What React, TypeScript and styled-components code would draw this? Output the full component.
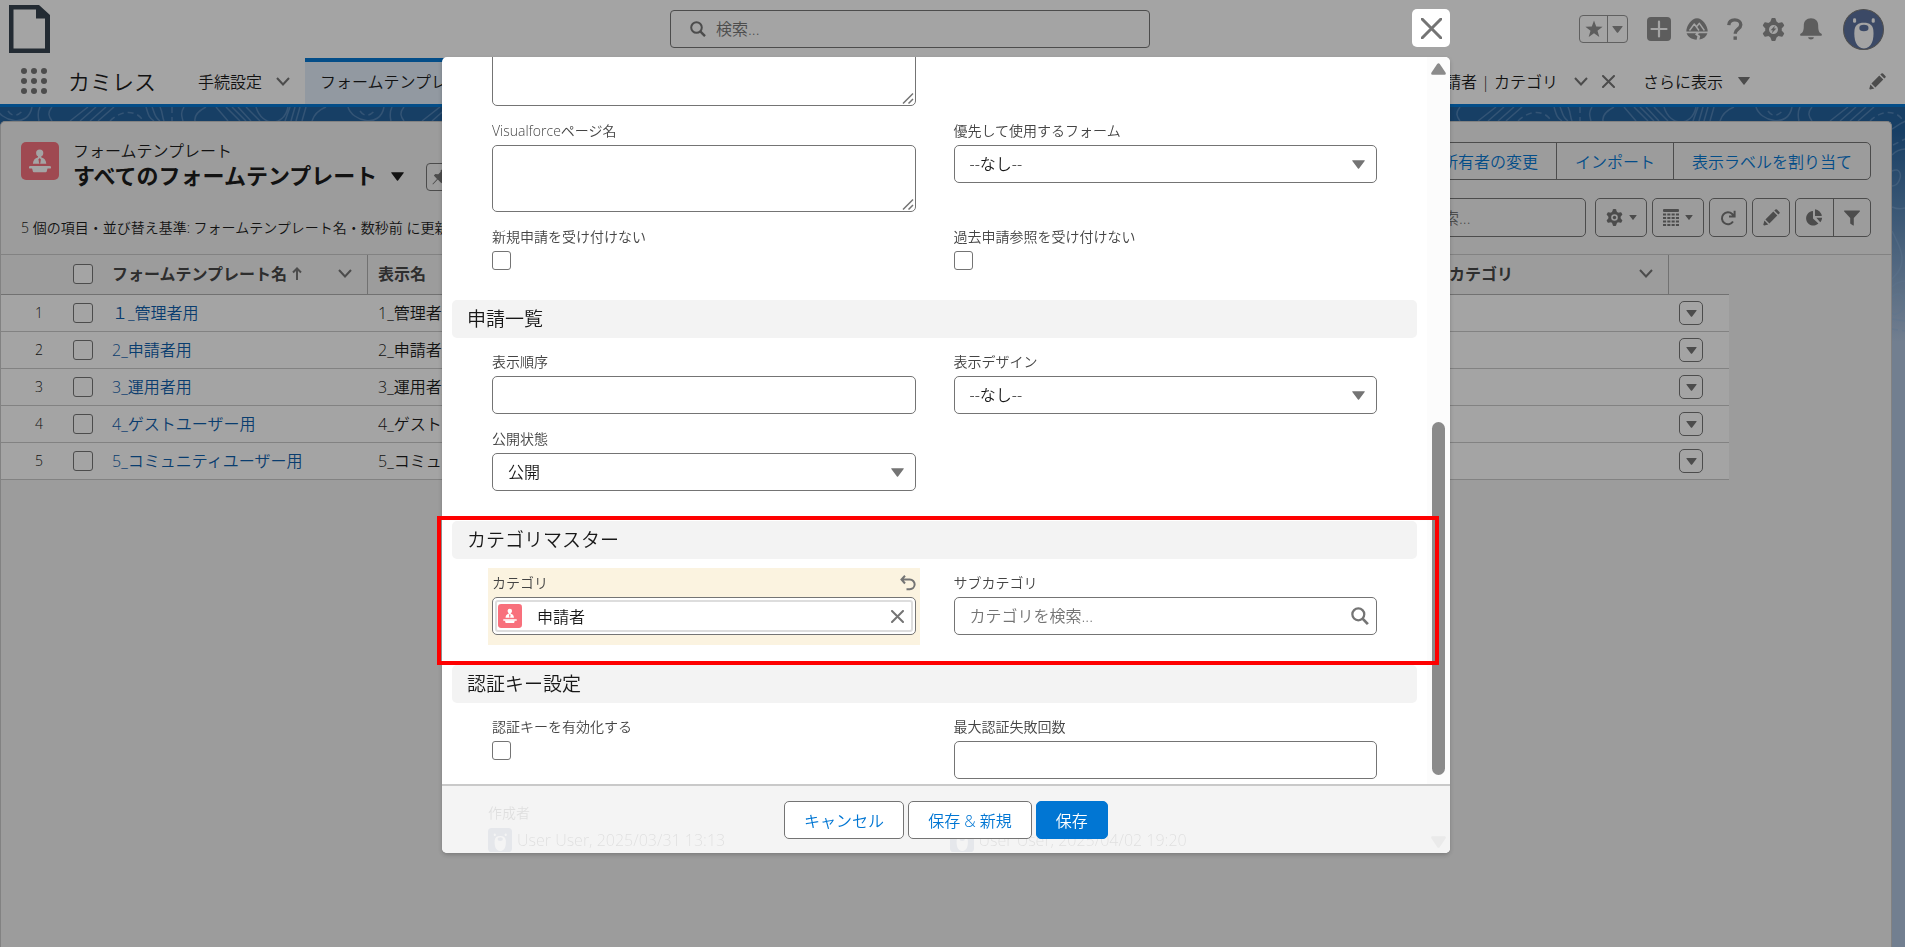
import React, { useId } from "react";
import styled, { createGlobalStyle, css } from "styled-components";

const GlobalStyle = createGlobalStyle`
  *, *::before, *::after { box-sizing: border-box; }
  body { margin: 0; background: #b0c4df; }
  body, button, input, select, textarea {
    font-family: "Open Sans", "Noto Sans CJK JP", sans-serif;
    font-size: 16px;
    font-weight: 350;
    color: #181818;
  }
  button { cursor: pointer; }
`;

/* ---------- icons ---------- */

const Svg = styled.svg`
  display: block;
  flex: none;
  fill: currentColor;
`;

const StrokeSvg = styled(Svg)`
  fill: none;
  stroke: currentColor;
`;

const Chevron = () => (
  <StrokeSvg width="14" height="9" viewBox="0 0 14 9" strokeWidth="2" aria-hidden>
    <path d="M1 1 7 7.5 13 1" />
  </StrokeSvg>
);

const Triangle = ({ w = 12 }: { w?: number }) => (
  <Svg width={w} height={Math.round(w * 0.66)} viewBox="0 0 12 8" aria-hidden>
    <path d="M.6 0h10.8q.8.2.3.8L6.5 7.6q-.5.5-1 0L.3.8Q-.2.2.6 0Z" />
  </Svg>
);

const Cross = ({ size = 13, stroke = 2 }: { size?: number; stroke?: number }) => (
  <StrokeSvg width={size} height={size} viewBox={`0 0 ${size} ${size}`} strokeWidth={stroke} strokeLinecap="round" aria-hidden>
    <path d={`M1 1 ${size - 1} ${size - 1}M${size - 1} 1 1 ${size - 1}`} />
  </StrokeSvg>
);

const SearchIcon = ({ size = 16 }: { size?: number }) => (
  <StrokeSvg width={size} height={size} viewBox="0 0 16 16" strokeWidth="2" aria-hidden>
    <circle cx="6.5" cy="6.5" r="5.3" />
    <path d="m10.3 10.3 4.7 4.9" strokeWidth="2.4" />
  </StrokeSvg>
);

const PencilIcon = () => (
  <Svg width="17" height="17" viewBox="0 0 17 17" aria-hidden>
    <path d="M.8 16.3q-.6 0-.5-.6l1.1-4.1 3.9 3.9-4.1 1.1ZM2.4 10.4l7.9-7.9 4 4-7.9 7.9ZM11.3 1.6 12.4.5q.8-.7 1.6 0l2.4 2.4q.8.8 0 1.6l-1.1 1.1Z" />
  </Svg>
);

const GearIcon = ({ size, bolt }: { size: number; bolt?: boolean }) => (
  <Svg width={size} height={size} viewBox="-12 -12 24 24" aria-hidden>
    <circle r="6.7" fill="none" stroke="currentColor" strokeWidth="4" />
    {[0, 60, 120, 180, 240, 300].map((a) => (
      <path key={a} transform={`rotate(${a})`} d="M-3.4-7.6-2.2-11.3q.3-.6.8-.6h2.8q.6 0 .8.6L3.4-7.6Z" />
    ))}
    {bolt ? <path d="M1.4-4-3 .7h2.2L-1.7 4 3-1H.7Z" /> : <circle r="2.4" />}
  </Svg>
);

const StarIcon = () => (
  <Svg width="18" height="18" viewBox="0 0 18 18" aria-hidden>
    <path d="m9 .4 2.2 6.1 6.4.2-5.1 4 1.8 6.3L9 13.3 3.7 17l1.8-6.3-5.1-4 6.4-.2Z" />
  </Svg>
);

const PlusSquareIcon = () => (
  <Svg width="24" height="24" viewBox="0 0 24 24" aria-hidden>
    <rect width="24" height="24" rx="4" />
    <path d="M12 4.500v15M4.500 12h15" stroke="#fff" strokeWidth="2.2" strokeLinecap="round" />
  </Svg>
);

const TrailIcon = () => (
  <Svg width="22" height="22" viewBox="0 0 22 22" aria-hidden>
    <path d="M.3 13.500C.3 8 5.500.3 11 .3S21.700 8 21.700 13.500Z" />
    <path d="M.6 15.300h9.600l-1.200 1.200 2.400 1.800-.8 3.400C5.500 21.500 1.800 19 .6 15.300ZM12.800 15.300h8.600c-1 3.300-4 5.700-8 6.300l.8-3.600-2.200-1.600Z" />
    <path d="M3.500 12.500 8.300 6l4.700 6.500M10.500 8.800 13.400 5.300l5 7.200" fill="none" stroke="#fff" strokeWidth="1.4" strokeLinejoin="round" />
  </Svg>
);

const HelpIcon = () => (
  <StrokeSvg width="16" height="22" viewBox="0 0 16 22" strokeWidth="3.4" aria-hidden>
    <path d="M1.800 7.200C2 3.500 4.600 1.900 7.800 1.900c3.400 0 6 1.900 6 4.900 0 4.200-5.500 4.400-5.500 8.200v.8" />
    <path d="M8.200 18.400v3.400" />
  </StrokeSvg>
);

const BellIcon = () => (
  <Svg width="22" height="22" viewBox="0 0 22 22" aria-hidden>
    <path d="M11 .3c4.500 0 7.200 3 7.200 7.200 0 5 .8 7 3.300 8.300.6.500.5 1.900-.5 1.900H1c-1 0-1.100-1.400-.5-1.900 2.500-1.300 3.300-3.300 3.300-8.300C3.800 3.300 6.500.3 11 .3ZM8.100 19.300h5.800c-.3 3-5.500 3-5.800 0Z" />
  </Svg>
);

const BearShapes = () => (
  <>
    <rect x="9.8" y="9" width="3" height="4.5" rx="1.4" fill="#fff" />
    <rect x="28" y="9" width="3" height="4.5" rx="1.4" fill="#fff" />
    <path d="M20.400 13.300c5.800 0 8.700 2.500 9.200 7.200.9 9-1.600 18-9.200 18s-10.100-9-9.200-18c.5-4.700 3.400-7.200 9.200-7.200Z" fill="#fff" />
    <ellipse cx="20.4" cy="18.5" rx="4.5" ry="3.2" />
  </>
);

const AvatarIcon = () => (
  <Svg width="41" height="41" viewBox="0 0 40 40" color="#5a709d" aria-hidden>
    <circle cx="20" cy="20" r="19.5" stroke="#777" />
    <BearShapes />
  </Svg>
);

const UserIcon = () => (
  <Svg width="24" height="24" viewBox="0 0 40 40" color="#5a709d" aria-hidden>
    <rect width="40" height="40" rx="6" />
    <BearShapes />
  </Svg>
);

const ObjectIcon = ({ size }: { size: number }) => (
  <Svg width={size} height={size} viewBox="0 0 38 38" aria-hidden>
    <rect width="38" height="38" rx="5" fill="#f8707c" />
    <g fill="#fff">
      <circle cx="18.7" cy="11" r="3.6" />
      <path d="M17.300 13h2.800l.3 2.500c2.900.6 4.700 2.800 4.900 6.300H11.900c.2-3.500 2-5.700 4.900-6.300Z" />
      <rect x="8" y="24" width="22" height="2.6" rx="1.2" />
      <path d="M11 26h15.600l-.8 3.300q-.2.900-1.100.9H12.900q-.9 0-1.100-.9Z" />
    </g>
    <path d="m18.700 16 1.200 1.500-.7 4.300h-1l-.7-4.300Z" fill="#f8707c" />
  </Svg>
);

const LogoIcon = () => (
  <Svg width="42" height="48" viewBox="0 0 42 48" color="#33404c" aria-hidden>
    <path fillRule="evenodd" d="M0 0h30l11 10v38H0ZM4.500 4.500v39H36V13.500h-9v-9Z" />
  </Svg>
);

const LauncherIcon = () => (
  <Svg width="26" height="26" viewBox="0 0 26 26" aria-hidden>
    {[3, 13, 23].map((y) => [3, 13, 23].map((x) => <circle key={`${x}-${y}`} cx={x} cy={y} r="3" />))}
  </Svg>
);

const PinIcon = () => (
  <Svg width="16" height="16" viewBox="0 0 16 16" aria-hidden>
    <path d="M9.500.5 15.500 6.500l-1.300 1-1-.3-2.500 2.500.2 3-1.500 1.500L5.800 10.600 1 15.500l-.6-.6L5 10 1.800 6.600l1.500-1.500 3 .2L8.800 2.800l-.3-1Z" />
  </Svg>
);

const TableIcon = () => (
  <Svg width="16" height="17" viewBox="0 0 16 17" aria-hidden>
    <rect width="16" height="3" rx="1" />
    {[4.5, 8, 11.5, 15].map((y) => [0, 4.3, 8.6, 12.9].map((x) => <rect key={`${x}-${y}`} x={x} y={y} width="3.1" height="2" />))}
  </Svg>
);

const RefreshIcon = () => (
  <StrokeSvg width="16" height="16" viewBox="0 0 16 16" strokeWidth="2" aria-hidden>
    <path d="M13 11.500A6 6 0 1 1 12.200 4l1.800 2M14.600.8v5.700H9" />
  </StrokeSvg>
);

const ChartIcon = () => (
  <Svg width="17" height="17" viewBox="0 0 17 17" aria-hidden>
    <path d="M7 2v7.600l5.400 5A7.300 7.300 0 1 1 7 2Z" />
    <path d="M9 .3A7.500 7.500 0 0 1 15.800 7H9ZM10.300 8.800h5.800c-.1 1.900-.8 3.500-1.900 4.500Z" />
  </Svg>
);

const FilterIcon = () => (
  <Svg width="16" height="16" viewBox="0 0 16 16" aria-hidden>
    <path d="M.5.5h15q.8.300.3 1L9.800 8v7.200q-.2.600-.7.300l-2.600-1.700q-.3-.2-.3-.6V8L.2 1.500Q-.3.800.5.500Z" />
  </Svg>
);

const UndoIcon = () => (
  <StrokeSvg width="16" height="16" viewBox="0 0 16 16" strokeWidth="2" aria-hidden>
    <path d="M5 .8 1.500 4.500 5 8.500M1.800 4.500h8a4.700 4.700 0 0 1 0 9.700H6.500" />
  </StrokeSvg>
);

const SortIcon = () => (
  <StrokeSvg width="10" height="13" viewBox="0 0 10 13" strokeWidth="2" aria-hidden>
    <path d="M5 13V1.500M1 5.500l4-4 4 4" />
  </StrokeSvg>
);

/* ---------- global header ---------- */

const Page = styled.div`
  display: flex;
  flex-direction: column;
  min-height: 100vh;
`;

const TopBar = styled.header`
  display: grid;
  grid-template-columns: 670fr 480px 755fr;
  align-items: center;
  height: 58px;
  background: #fff;
`;

const Logo = styled.div`
  padding-left: 9px;
`;

const GlobalSearch = styled.label`
  display: flex;
  align-items: center;
  gap: 10px;
  height: 38px;
  padding: 0 19px;
  border: 1px solid #747474;
  border-radius: 4px;
  color: #747474;
  input {
    flex: 1;
    border: 0;
    background: none;
    outline: 0;
    padding: 0;
  }
  input::placeholder { color: #747474; }
`;

const TopActions = styled.div`
  display: flex;
  justify-content: flex-end;
  align-items: center;
  padding-right: 21px;
`;

const FavoriteGroup = styled.div`
  display: flex;
  margin-right: 12px;
  border: 1px solid #939393;
  border-radius: 4px;
  button + button { border-left: 1px solid #939393; width: 20px; }
`;

const IconButton = styled.button<{ $w?: number; $h?: number }>`
  display: flex;
  align-items: center;
  justify-content: center;
  width: ${(p) => p.$w ?? 38}px;
  height: ${(p) => p.$h ?? 38}px;
  padding: 0;
  border: 0;
  background: none;
  color: #8f8f8f;
`;

const AvatarButton = styled(IconButton)`
  width: 41px;
  height: 53px;
  margin-left: 13px;
`;

const NavBar = styled.nav`
  display: flex;
  align-items: center;
  height: 49px;
  padding: 0 19px 0 21px;
  border-bottom: 3px solid #0176d3;
  background: #fff;
  color: #747474;
`;

const AppName = styled.span`
  margin: 0 42px 0 21px;
  font-size: 22px;
  line-height: 30px;
  color: #181818;
`;

const NavTab = styled.div<{ $active?: boolean }>`
  display: flex;
  align-items: center;
  gap: 14px;
  height: 46px;
  padding-right: 15px;
  ${(p) =>
    p.$active &&
    css`
      padding-left: 15px;
      border-top: 4px solid #0176d3;
      padding-bottom: 4px;
      background: #e2eefb;
    `}
  a { color: #181818; text-decoration: none; }
`;

const NavEnd = styled.div`
  display: flex;
  align-items: center;
  gap: 14px;
  margin-left: auto;
  a { margin-right: 2px; color: #181818; text-decoration: none; }
`;

const MoreButton = styled.button`
  display: flex;
  align-items: center;
  gap: 15px;
  margin: 0 105px 0 14px;
  padding: 0;
  border: 0;
  background: none;
  svg { color: #747474; }
`;

/* ---------- list view ---------- */

const Main = styled.main`
  position: relative;
  display: flex;
  flex: 1;
  padding: 14px 13px 0 0;
  background: linear-gradient(#215f9b 0, #215f9b 24px, #b0c4df 235px);
`;

const Contours = styled.svg`
  position: absolute;
  inset: 0;
  width: 100%;
  height: 240px;
  fill: none;
  stroke: #8fb4dc;
  stroke-width: 1.5;
  opacity: 0.4;
`;

const Card = styled.section`
  position: relative;
  flex: 1;
  min-width: 0;
  border: 1px solid #c9c9c9;
  border-bottom: 0;
  border-radius: 5px 5px 0 0;
  background: #f3f3f3;
`;

const CardHead = styled.div`
  padding: 20px 20px 17px;
  border-bottom: 1px solid #c9c9c9;
`;

const HeadRow = styled.div`
  display: flex;
  align-items: flex-start;
  gap: 14px;
`;

const Titles = styled.div`
  p { margin: 0; line-height: 18px; }
`;

const TitleLine = styled.div`
  display: flex;
  align-items: center;
  height: 33px;
  h1 {
    align-self: flex-start;
    margin: 0 14px 0 0;
    font-size: 22px;
    font-weight: 700;
    line-height: 30px;
    white-space: nowrap;
  }
`;

const outlined = css`
  border: 1px solid #747474;
  border-radius: 5px;
`;

const PinButton = styled(IconButton)`
  ${outlined}
  margin-left: 22px;
  border-radius: 4px;
  color: #747474;
`;

const ActionGroup = styled.div`
  ${outlined}
  display: flex;
  margin-left: auto;
  button {
    height: 36px;
    padding: 0 18px;
    border: 0;
    background: none;
    color: #0176d3;
    white-space: nowrap;
  }
  button + button { border-left: 1px solid #747474; }
`;

const ToolRow = styled.div`
  display: flex;
  align-items: center;
  gap: 5px;
  margin-top: 5px;
`;

const Info = styled.p`
  align-self: flex-end;
  flex: 1;
  margin: 0;
  font-size: 14px;
  line-height: 18px;
`;

const ListSearch = styled.input`
  ${outlined}
  width: 288px;
  height: 39px;
  margin-right: 4px;
  padding: 0 12px 0 32px;
  background: none;
  &::placeholder { color: #747474; }
`;

const ToolButton = styled(IconButton)`
  ${outlined}
  gap: 6px;
  height: 39px;
  color: #747474;
`;

const ToolPair = styled.div`
  ${outlined}
  display: flex;
  button { width: 37px; height: 37px; color: #747474; }
  button + button { border-left: 1px solid #747474; width: 37px; }
`;

const ListTable = styled.table`
  width: calc(100% - 162px);
  table-layout: fixed;
  border-collapse: separate;
  border-spacing: 0;
  th, td {
    height: 37px;
    padding: 0 10px;
    border-bottom: 1px solid #c9c9c9;
    text-align: left;
    line-height: 20px;
  }
  th {
    height: 40px;
    padding-bottom: 2px;
    border-bottom-color: #aeaeae;
    color: #444;
    font-weight: 700;
  }
  td { background: #fff; }
  td:first-child { padding-right: 9px; text-align: right; font-size: 14px; }
  td:nth-child(2), th:nth-child(2) { padding-left: 21px; }
  a { color: #0b5cab; text-decoration: none; }
`;

const Col = styled.col<{ $w?: number }>`
  width: ${(p) => (p.$w ? `${p.$w}px` : "auto")};
`;

const HeadCell = styled.th<{ $divider?: boolean }>`
  ${(p) => p.$divider && css`border-right: 1px solid #aeaeae;`}
`;

const HeadInner = styled.div`
  display: flex;
  align-items: center;
  gap: 5px;
  color: #747474;
  span { color: #444; }
  svg:last-child { margin-left: auto; margin-right: 5px; }
`;

const Check = styled.input<{ $size: number }>`
  appearance: none;
  display: block;
  width: ${(p) => p.$size}px;
  height: ${(p) => p.$size}px;
  margin: 0;
  border: 1px solid #747474;
  border-radius: 3px;
  background: #fff;
`;

const RowMenu = styled(IconButton)`
  ${outlined}
  color: #747474;
`;

/* ---------- modal ---------- */

const Backdrop = styled.div`
  position: fixed;
  inset: 0;
  display: flex;
  flex-direction: column;
  align-items: center;
  gap: 10px;
  padding: 9px 13px 94px 0;
  background: rgba(8, 7, 7, 0.37);
`;

const ModalTop = styled.div`
  display: flex;
  justify-content: flex-end;
  width: 70%;
  max-width: 1008px;
`;

const CloseButton = styled(IconButton)`
  border-radius: 5px;
  background: #fff;
  color: #747474;
`;

const Modal = styled.div`
  position: relative;
  flex: 1;
  min-height: 0;
  width: 70%;
  max-width: 1008px;
`;

const ModalPanel = styled.div`
  position: relative;
  display: flex;
  height: 100%;
  overflow: hidden;
  border-radius: 5px;
  background: #fff;
  box-shadow: 0 2px 4px rgba(0, 0, 0, 0.2);
`;

const ModalBody = styled.div`
  flex: 1;
  min-width: 0;
  padding: 0 10px;
`;

const FieldGrid = styled.div<{ $scrolled?: boolean }>`
  display: grid;
  grid-template-columns: 1fr 1fr;
  column-gap: 30px;
  padding: 0 36px;
  margin-top: ${(p) => (p.$scrolled ? -22 : 0)}px;
`;

const SectionTitle = styled.h3`
  margin: 20px 0 9px;
  padding: 0 15px;
  border-radius: 5px;
  background: #f3f3f3;
  font-size: 19px;
  font-weight: inherit;
  line-height: 38px;
`;

const FieldCell = styled.div<{ $edited?: boolean }>`
  padding: 4px 4px 10px;
  background: ${(p) => (p.$edited ? "#fbf3e0" : "transparent")};
`;

const LabelRow = styled.div`
  display: flex;
  align-items: center;
  justify-content: space-between;
  height: 22px;
  margin-bottom: 3px;
  label { font-size: 14px; line-height: 22px; color: #444; }
`;

const FieldButton = styled(IconButton)`
  color: #747474;
`;

const Control = styled.div`
  position: relative;
  color: #747474;
`;

const box = css`
  display: block;
  width: 100%;
  height: 38px;
  margin: 0;
  padding: 0 15px;
  border: 1px solid #747474;
  border-radius: 5px;
  background: #fff;
`;

const TextInput = styled.input`
  ${box}
  &::placeholder { color: #747474; }
`;

const TextArea = styled.textarea`
  ${box}
  height: 67px;
  resize: none;
`;

const Select = styled.select`
  ${box}
  appearance: none;
`;

const EndIcon = styled.span<{ $right?: number }>`
  position: absolute;
  top: 0;
  right: ${(p) => p.$right ?? 12}px;
  display: flex;
  align-items: center;
  height: 100%;
  pointer-events: none;
`;

const Grip = styled(StrokeSvg)`
  position: absolute;
  right: 2px;
  bottom: 2px;
`;

const LookupBox = styled.div`
  ${box}
  padding: 2px;
`;

const Pill = styled.div`
  display: flex;
  align-items: center;
  gap: 15px;
  height: 32px;
  padding: 0 7px 0 1px;
  border: 2px solid #ddd;
  border-radius: 3px;
  input {
    flex: 1;
    min-width: 0;
    padding: 0;
    border: 0;
    outline: 0;
    background: none;
  }
`;

const SystemCell = styled.div`
  padding-top: 12px;
  p { height: 24px; margin: 0; font-size: 14px; line-height: 24px; }
  div { display: flex; align-items: center; gap: 5px; height: 30px; line-height: 20px; }
`;

const ScrollTrack = styled.div`
  display: flex;
  flex-direction: column;
  align-items: center;
  justify-content: space-between;
  width: 23px;
  padding: 6px 0 5px;
  background: #fcfcfc;
  color: #8b8b8b;
`;

const ScrollThumb = styled.div`
  width: 13px;
  height: 45%;
  margin-top: 286px;
  border-radius: 7px;
  background: #8b8b8b;
`;

const ModalFooter = styled.footer`
  position: absolute;
  inset: auto 0 0;
  display: flex;
  justify-content: center;
  gap: 4px;
  height: 69px;
  padding-top: 15px;
  border-top: 2px solid #c9c9c9;
  background: rgba(243, 243, 243, 0.91);
`;

const Button = styled.button<{ $brand?: boolean }>`
  height: 38px;
  padding: 0 19px;
  border: 1px solid ${(p) => (p.$brand ? "#0176d3" : "#747474")};
  border-radius: 5px;
  background: ${(p) => (p.$brand ? "#0176d3" : "#fff")};
  color: ${(p) => (p.$brand ? "#fff" : "#0176d3")};
`;

const RedFrame = styled.div`
  position: absolute;
  top: 459px;
  left: -5px;
  right: 11px;
  height: 149px;
  border: 4px solid #fe0000;
  pointer-events: none;
`;

/* ---------- fields ---------- */

type Kind = "text" | "textarea" | "select" | "checkbox" | "search" | "lookup";

function Field({ label, kind, value }: { label: string; kind: Kind; value?: string }) {
  const id = useId();
  return (
    <FieldCell $edited={kind === "lookup"}>
      <LabelRow>
        <label htmlFor={id}>{label}</label>
        {kind === "lookup" && (
          <FieldButton type="button" $w={16} $h={22} aria-label="元に戻す">
            <UndoIcon />
          </FieldButton>
        )}
      </LabelRow>
      <Control>
        {kind === "text" && <TextInput id={id} />}
        {kind === "checkbox" && <Check id={id} type="checkbox" $size={19} />}
        {kind === "textarea" && <LongText id={id} />}
        {kind === "select" && (
          <>
            <Select id={id} defaultValue={value}>
              <option>{value}</option>
            </Select>
            <EndIcon $right={12}>
              <Triangle w={13} />
            </EndIcon>
          </>
        )}
        {kind === "search" && (
          <>
            <TextInput id={id} placeholder={value} />
            <EndIcon $right={8}>
              <SearchIcon size={18} />
            </EndIcon>
          </>
        )}
        {kind === "lookup" && (
          <LookupBox>
            <Pill>
              <ObjectIcon size={24} />
              <input id={id} defaultValue={value} />
              <FieldButton type="button" $w={13} $h={24} aria-label="選択を解除">
                <Cross size={13} />
              </FieldButton>
            </Pill>
          </LookupBox>
        )}
      </Control>
    </FieldCell>
  );
}

function LongText(props: { id?: string; "aria-label"?: string }) {
  return (
    <>
      <TextArea {...props} />
      <Grip width="12" height="12" viewBox="0 0 12 12" strokeWidth="1.5" aria-hidden>
        <path d="M1 11.500 11 1.500M6.500 11.500l4.500-4.500" />
      </Grip>
    </>
  );
}

/* ---------- page ---------- */

const rows = [
  { link: "１_管理者用", name: "1_管理者用" },
  { link: "2_申請者用", name: "2_申請者用" },
  { link: "3_運用者用", name: "3_運用者用" },
  { link: "4_ゲストユーザー用", name: "4_ゲストユーザー用" },
  { link: "5_コミュニティユーザー用", name: "5_コミュニティユーザー用" },
];

const contourTiles = [0, 352, 704, 1056, 1408, 1760];

export default function App() {
  return (
    <>
      <GlobalStyle />
      <Page>
        <TopBar>
          <Logo>
            <LogoIcon />
          </Logo>
          <GlobalSearch>
            <SearchIcon size={16} />
            <input type="search" placeholder="検索..." aria-label="検索" />
          </GlobalSearch>
          <TopActions>
            <FavoriteGroup>
              <IconButton $w={27} $h={26} aria-label="お気に入り"><StarIcon /></IconButton>
              <IconButton $h={26} aria-label="お気に入り一覧"><Triangle w={11} /></IconButton>
            </FavoriteGroup>
            <IconButton aria-label="作成"><PlusSquareIcon /></IconButton>
            <IconButton aria-label="ガイダンス"><TrailIcon /></IconButton>
            <IconButton aria-label="ヘルプ"><HelpIcon /></IconButton>
            <IconButton aria-label="設定"><GearIcon size={23} bolt /></IconButton>
            <IconButton aria-label="通知"><BellIcon /></IconButton>
            <AvatarButton aria-label="プロファイル"><AvatarIcon /></AvatarButton>
          </TopActions>
        </TopBar>

        <NavBar>
          <LauncherIcon />
          <AppName>カミレス</AppName>
          <NavTab>
            <a href="#settings">手続設定</a>
            <Chevron />
          </NavTab>
          <NavTab $active>
            <a href="#templates">フォームテンプレート</a>
            <Chevron />
          </NavTab>
          <NavEnd>
            <a href="#category">申請者 | カテゴリ</a>
            <Chevron />
            <Cross />
            <MoreButton>
              さらに表示
              <Triangle />
            </MoreButton>
            <PencilIcon />
          </NavEnd>
        </NavBar>

        <Main>
          <Contours aria-hidden>
            {contourTiles.map((x) => (
              <g key={x} transform={`translate(${x} 0)`}>
                <path d="M-4 0c4 14 32 22 36 0M40 0c-3 6-2 10-1 14M52 0c-5 6-3 10 0 14M70 14 88 0M80 14 96 0M90 14 106 0M98 14 114 0M146 0c2 6 2 10 8 14M152 0c3 6 2 10 8 14M160 0c3 6 2 10 4 14M184 0c-4 6-2 10-1 14M206 0c-8 4-12 8-11 14M216 0l12 14M226 0l14 14M232 0l14 14M238 0l13 14M246 0l14 14M256 0c6 20 28 20 32 0M290 0l-5 14M295 0l-4 14M300 0l-4 14M306 0l-4 14M326 0c-8 3-12 8-14 14" />
                <path d="M8 4c4 6 10 6 16-2M110 14c10-10 24-12 32-2M172 0v14" strokeDasharray="6 4" />
              </g>
            ))}
            <svg x="100%" overflow="visible">
              <path d="M-13 22c4-2 8-6 14-8M-13 48c4-4 8-6 14-6M-13 64c8-4 10 4 7 10-2 4-4 5-7 5M-13 100q7 3 13 1M-13 124c6 12 10 20 10 28 0 10-6 16-10 20M-13 190c6-6 12-2 12 6s-8 14-12 10M-13 180c4-4 10-6 14-6M-13 212l13 2" />
              <path d="M-12 38 0 32M-13 222l13 2" strokeDasharray="6 4" />
            </svg>
          </Contours>
          <Card>
            <CardHead>
              <HeadRow>
                <ObjectIcon size={38} />
                <Titles>
                  <p>フォームテンプレート</p>
                  <TitleLine>
                    <h1>すべてのフォームテンプレート</h1>
                    <Triangle w={13} />
                    <PinButton $w={28} $h={28} aria-label="固定"><PinIcon /></PinButton>
                  </TitleLine>
                </Titles>
                <ActionGroup>
                  <button>所有者の変更</button>
                  <button>インポート</button>
                  <button>表示ラベルを割り当て</button>
                </ActionGroup>
              </HeadRow>
              <ToolRow>
                <Info>5 個の項目・並び替え基準: フォームテンプレート名・数秒前 に更新</Info>
                <ListSearch type="search" placeholder="このリストを検索..." aria-label="このリストを検索" />
                <ToolButton $w={52} aria-label="リストビューコントロール"><GearIcon size={17} /><Triangle w={8} /></ToolButton>
                <ToolButton $w={52} aria-label="表示形式"><TableIcon /><Triangle w={8} /></ToolButton>
                <ToolButton $w={38} aria-label="更新"><RefreshIcon /></ToolButton>
                <ToolButton $w={38} aria-label="編集"><PencilIcon /></ToolButton>
                <ToolPair>
                  <IconButton aria-label="グラフ"><ChartIcon /></IconButton>
                  <IconButton aria-label="検索条件"><FilterIcon /></IconButton>
                </ToolPair>
              </ToolRow>
            </CardHead>
            <ListTable>
              <colgroup>
                <Col $w={51} />
                <Col $w={50} />
                <Col $w={266} />
                <Col />
                <Col $w={230} />
                <Col $w={60} />
              </colgroup>
              <thead>
                <tr>
                  <HeadCell />
                  <HeadCell><Check type="checkbox" $size={20} aria-label="すべて選択" /></HeadCell>
                  <HeadCell $divider>
                    <HeadInner><span>フォームテンプレート名</span><SortIcon /><Chevron /></HeadInner>
                  </HeadCell>
                  <HeadCell $divider>表示名</HeadCell>
                  <HeadCell $divider>
                    <HeadInner><span>カテゴリ</span><Chevron /></HeadInner>
                  </HeadCell>
                  <HeadCell />
                </tr>
              </thead>
              <tbody>
                {rows.map((r, i) => (
                  <tr key={r.name}>
                    <td>{i + 1}</td>
                    <td><Check type="checkbox" $size={20} aria-label={`${r.name}を選択`} /></td>
                    <td><a href={`#row-${i + 1}`}>{r.link}</a></td>
                    <td>{r.name}</td>
                    <td />
                    <td><RowMenu $w={24} $h={24} aria-label="アクション"><Triangle w={11} /></RowMenu></td>
                  </tr>
                ))}
              </tbody>
            </ListTable>
          </Card>
        </Main>
      </Page>

      <Backdrop>
        <ModalTop>
          <CloseButton aria-label="閉じる"><Cross size={21} stroke={3} /></CloseButton>
        </ModalTop>
        <Modal role="dialog" aria-label="フォームテンプレートの編集">
          <ModalPanel>
            <ModalBody>
              <FieldGrid $scrolled>
                <FieldCell>
                  <Control><LongText aria-label="説明" /></Control>
                </FieldCell>
                <span />
                <Field kind="textarea" label="Visualforceページ名" />
                <Field kind="select" label="優先して使用するフォーム" value="--なし--" />
                <Field kind="checkbox" label="新規申請を受け付けない" />
                <Field kind="checkbox" label="過去申請参照を受け付けない" />
              </FieldGrid>
              <SectionTitle>申請一覧</SectionTitle>
              <FieldGrid>
                <Field kind="text" label="表示順序" />
                <Field kind="select" label="表示デザイン" value="--なし--" />
                <Field kind="select" label="公開状態" value="公開" />
              </FieldGrid>
              <SectionTitle>カテゴリマスター</SectionTitle>
              <FieldGrid>
                <Field kind="lookup" label="カテゴリ" value="申請者" />
                <Field kind="search" label="サブカテゴリ" value="カテゴリを検索..." />
              </FieldGrid>
              <SectionTitle>認証キー設定</SectionTitle>
              <FieldGrid>
                <Field kind="checkbox" label="認証キーを有効化する" />
                <Field kind="text" label="最大認証失敗回数" />
                <SystemCell>
                  <p>作成者</p>
                  <div><UserIcon />User User, 2025/03/31 13:13</div>
                </SystemCell>
                <SystemCell>
                  <p />
                  <div><UserIcon />User User, 2025/04/02 19:20</div>
                </SystemCell>
              </FieldGrid>
            </ModalBody>
            <ScrollTrack aria-hidden>
              <Svg width="15" height="12" viewBox="0 0 15 12">
                <path d="M6.200 1Q7.500-.7 8.800 1l5.700 8.500q1 2.200-1 2.200h-12q-2 0-1-2.200Z" />
              </Svg>
              <ScrollThumb />
              <Svg width="15" height="12" viewBox="0 0 15 12">
                <path d="M6.200 11q1.300 1.700 2.600 0l5.700-8.500q1-2.200-1-2.200h-12q-2 0-1 2.200Z" />
              </Svg>
            </ScrollTrack>
            <ModalFooter>
              <Button>キャンセル</Button>
              <Button>保存 &amp; 新規</Button>
              <Button $brand>保存</Button>
            </ModalFooter>
          </ModalPanel>
          <RedFrame />
        </Modal>
      </Backdrop>
    </>
  );
}
